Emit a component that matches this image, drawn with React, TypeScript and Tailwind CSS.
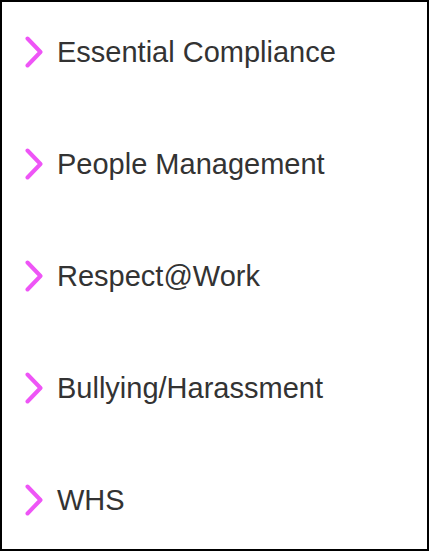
import React from 'react';

const temas = [
  'Essential Compliance',
  'People Management',
  'Respect@Work',
  'Bullying/Harassment',
  'WHS',
];

const Chevron = () => (
  <svg width="18" height="32" viewBox="0 0 18 32" className="shrink-0">
    <polyline
      points="2.5,2.5 15.5,16 2.5,29.5"
      fill="none"
      stroke="#ee55f6"
      strokeWidth="4"
      strokeLinecap="round"
      strokeLinejoin="round"
    />
  </svg>
);

export default function App() {
  return (
    <div
      className="w-[429px] h-[551px] bg-white border-2 border-black box-border pt-[30px] pl-[23px]"
      style={{ fontFamily: '"Liberation Sans", Arial, sans-serif' }}
    >
      <ul className="flex flex-col gap-[72px]">
        {temas.map((tema) => (
          <li key={tema} className="flex items-center gap-[14px] h-10">
            <Chevron />
            <span className="text-[29px] leading-10 text-[#333333]">{tema}</span>
          </li>
        ))}
      </ul>
    </div>
  );
}
